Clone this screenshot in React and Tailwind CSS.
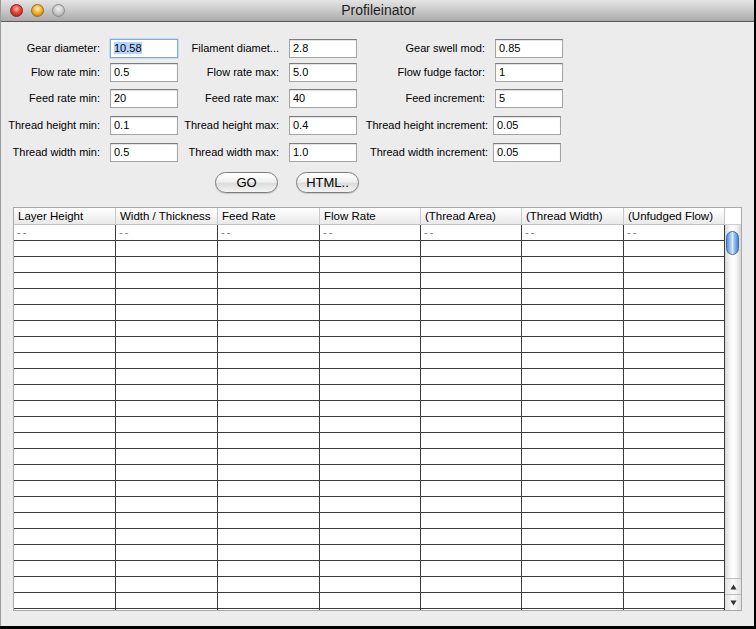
import React from "react";

const rows = [
  {
    mt: "mt-[17px]",
    l1: "Gear diameter:", v1: "10.58", focus: true,
    l2: "Filament diamet...", v2: "2.8",
    l3: "Gear swell mod:", v3: "0.85", wide: false,
  },
  {
    mt: "mt-[5px]",
    l1: "Flow rate min:", v1: "0.5",
    l2: "Flow rate max:", v2: "5.0",
    l3: "Flow fudge factor:", v3: "1", wide: false,
  },
  {
    mt: "mt-[7px]",
    l1: "Feed rate min:", v1: "20",
    l2: "Feed rate max:", v2: "40",
    l3: "Feed increment:", v3: "5", wide: false,
  },
  {
    mt: "mt-[8px]",
    l1: "Thread height min:", v1: "0.1",
    l2: "Thread height max:", v2: "0.4",
    l3: "Thread height increment:", v3: "0.05", wide: true,
  },
  {
    mt: "mt-[8px]",
    l1: "Thread width min:", v1: "0.5",
    l2: "Thread width max:", v2: "1.0",
    l3: "Thread width increment:", v3: "0.05", wide: true,
  },
];

const cols = [
  { name: "Layer Height", w: "w-[102px]" },
  { name: "Width / Thickness", w: "w-[102px]" },
  { name: "Feed Rate", w: "w-[102px]" },
  { name: "Flow Rate", w: "w-[101px]" },
  { name: "(Thread Area)", w: "w-[101px]" },
  { name: "(Thread Width)", w: "w-[102px]" },
  { name: "(Unfudged Flow)", w: "w-[101px]" },
];

function Field({ value, focus }) {
  return (
    <div
      className={
        "h-[19px] w-[68px] shrink-0 bg-white px-[3px] text-[11px] leading-[17px] text-black border " +
        (focus
          ? "border-[#86a9d6] shadow-[0_0_0_1px_#c9dbf1]"
          : "border-[#a4a4a4] border-t-[#7c7c7c] shadow-[inset_0_1px_1px_rgba(0,0,0,0.12)]")
      }
    >
      {focus ? <span className="bg-[#b5d5fe]">{value}</span> : value}
    </div>
  );
}

function Light({ color }) {
  const cls =
    color === "red"
      ? "bg-[radial-gradient(circle_at_50%_35%,#ffb4a8_0%,#e8473a_45%,#9e1a10_100%)] border-[#8c1f17]"
      : color === "yellow"
      ? "bg-[radial-gradient(circle_at_50%_35%,#fff1a8_0%,#f2b43a_45%,#b06a0c_100%)] border-[#9a6a14]"
      : "bg-[radial-gradient(circle_at_50%_35%,#f2f2f2_0%,#c9c9c9_50%,#9a9a9a_100%)] border-[#8a8a8a]";
  return <div className={"h-[13px] w-[13px] rounded-full border " + cls} />;
}

export default function App() {
  return (
    <div className="w-[756px] h-[629px] bg-black font-['Liberation_Sans',Arial,sans-serif] text-black overflow-hidden">
      <div className="w-[754px] h-[626px] flex flex-col border-l border-[#9a9a9a] bg-[#ececec]">
        {/* Title bar */}
        <div className="h-[22px] shrink-0 relative flex items-center bg-[linear-gradient(#e4e4e4,#cfcfcf_40%,#a9a9a9)] border-b border-[#5a5a5a]">
          <div className="flex items-center gap-[8px] ml-[9px]">
            <Light color="red" />
            <Light color="yellow" />
            <Light color="grey" />
          </div>
          <div className="absolute inset-0 flex items-center justify-center text-[14px] text-[#1e1e1e] pl-[2px]">
            Profileinator
          </div>
        </div>

        {/* Form */}
        <div className="flex flex-col">
          {rows.map((r, i) => (
            <div key={i} className={"flex items-center " + r.mt}>
              <div className="w-[99px] shrink-0 text-right text-[11px] whitespace-nowrap">{r.l1}</div>
              <div className="ml-[10px]">
                <Field value={r.v1} focus={r.focus} />
              </div>
              <div className="w-[101px] shrink-0 text-right text-[11px] whitespace-nowrap">{r.l2}</div>
              <div className="ml-[10px]">
                <Field value={r.v2} />
              </div>
              <div className={(r.wide ? "w-[131px]" : "w-[128px]") + " shrink-0 text-right text-[11px] whitespace-nowrap"}>
                {r.l3}
              </div>
              <div className={r.wide ? "ml-[5px]" : "ml-[10px]"}>
                <Field value={r.v3} />
              </div>
            </div>
          ))}

          {/* Buttons */}
          <div className="flex items-center mt-[10px] ml-[214px] gap-[18px]">
            <div className="h-[21px] w-[63px] rounded-full border border-[#7d7d7d] bg-[linear-gradient(#ffffff,#f1f1f1_45%,#dcdcdc_55%,#f4f4f4)] shadow-[0_1px_1px_rgba(0,0,0,0.15)] flex items-center justify-center text-[13px]">
              GO
            </div>
            <div className="h-[21px] w-[63px] rounded-full border border-[#7d7d7d] bg-[linear-gradient(#ffffff,#f1f1f1_45%,#dcdcdc_55%,#f4f4f4)] shadow-[0_1px_1px_rgba(0,0,0,0.15)] flex items-center justify-center text-[13px]">
              HTML..
            </div>
          </div>
        </div>

        {/* Table */}
        <div className="mt-[14px] ml-[12px] w-[729px] h-[404px] border border-[#a9a9a9] bg-white flex overflow-hidden">
          <div className="flex flex-col w-[711px]">
            <div className="flex h-[17px] shrink-0 bg-[linear-gradient(#ffffff,#f4f4f4_50%,#e9e9e9)] border-b border-[#c2c2c2]">
              {cols.map((c, i) => (
                <div
                  key={i}
                  className={c.w + " shrink-0 border-r border-[#c8c8c8] pl-[4px] text-[11.5px] leading-[16px] whitespace-nowrap overflow-hidden"}
                >
                  {c.name}
                </div>
              ))}
            </div>
            <div className="flex flex-col overflow-hidden flex-1">
              {Array.from({ length: 25 }).map((_, r) => (
                <div key={r} className="flex h-[16px] shrink-0 border-b border-[#3c3c3c]">
                  {cols.map((c, i) => (
                    <div
                      key={i}
                      className={c.w + " shrink-0 border-r border-[#3c3c3c] pl-[3px] text-[11px] leading-[14px] tracking-[2px] text-[#7a7a7a]"}
                    >
                      {r === 0 ? "--" : ""}
                    </div>
                  ))}
                </div>
              ))}
            </div>
          </div>

          {/* Scrollbar */}
          <div className="w-[16px] flex flex-col">
            <div className="h-[17px] shrink-0 bg-white border-b border-[#d0d0d0]" />
            <div className="flex-1 relative bg-[linear-gradient(90deg,#d6d6d6,#f6f6f6_30%,#ffffff_50%,#f6f6f6_70%,#d6d6d6)]">
              <div className="absolute left-[1px] top-[6px] w-[13px] h-[24px] rounded-full border border-[#3f6fa8] bg-[linear-gradient(90deg,#5d8fd0,#a9cdf3_35%,#d8ecff_50%,#8cb9ea_70%,#4f84c8)]" />
            </div>
            <div className="h-[16px] shrink-0 border-t border-[#bdbdbd] bg-[linear-gradient(90deg,#e0e0e0,#fbfbfb_50%,#e0e0e0)] flex items-center justify-center">
              <svg width="7" height="6" viewBox="0 0 7 6">
                <path d="M3.5 0.5 L6.5 5.5 L0.5 5.5 Z" fill="#333" />
              </svg>
            </div>
            <div className="h-[16px] shrink-0 border-t border-[#bdbdbd] bg-[linear-gradient(90deg,#e0e0e0,#fbfbfb_50%,#e0e0e0)] flex items-center justify-center">
              <svg width="7" height="6" viewBox="0 0 7 6">
                <path d="M0.5 0.5 L6.5 0.5 L3.5 5.5 Z" fill="#333" />
              </svg>
            </div>
          </div>
        </div>
      </div>
    </div>
  );
}
